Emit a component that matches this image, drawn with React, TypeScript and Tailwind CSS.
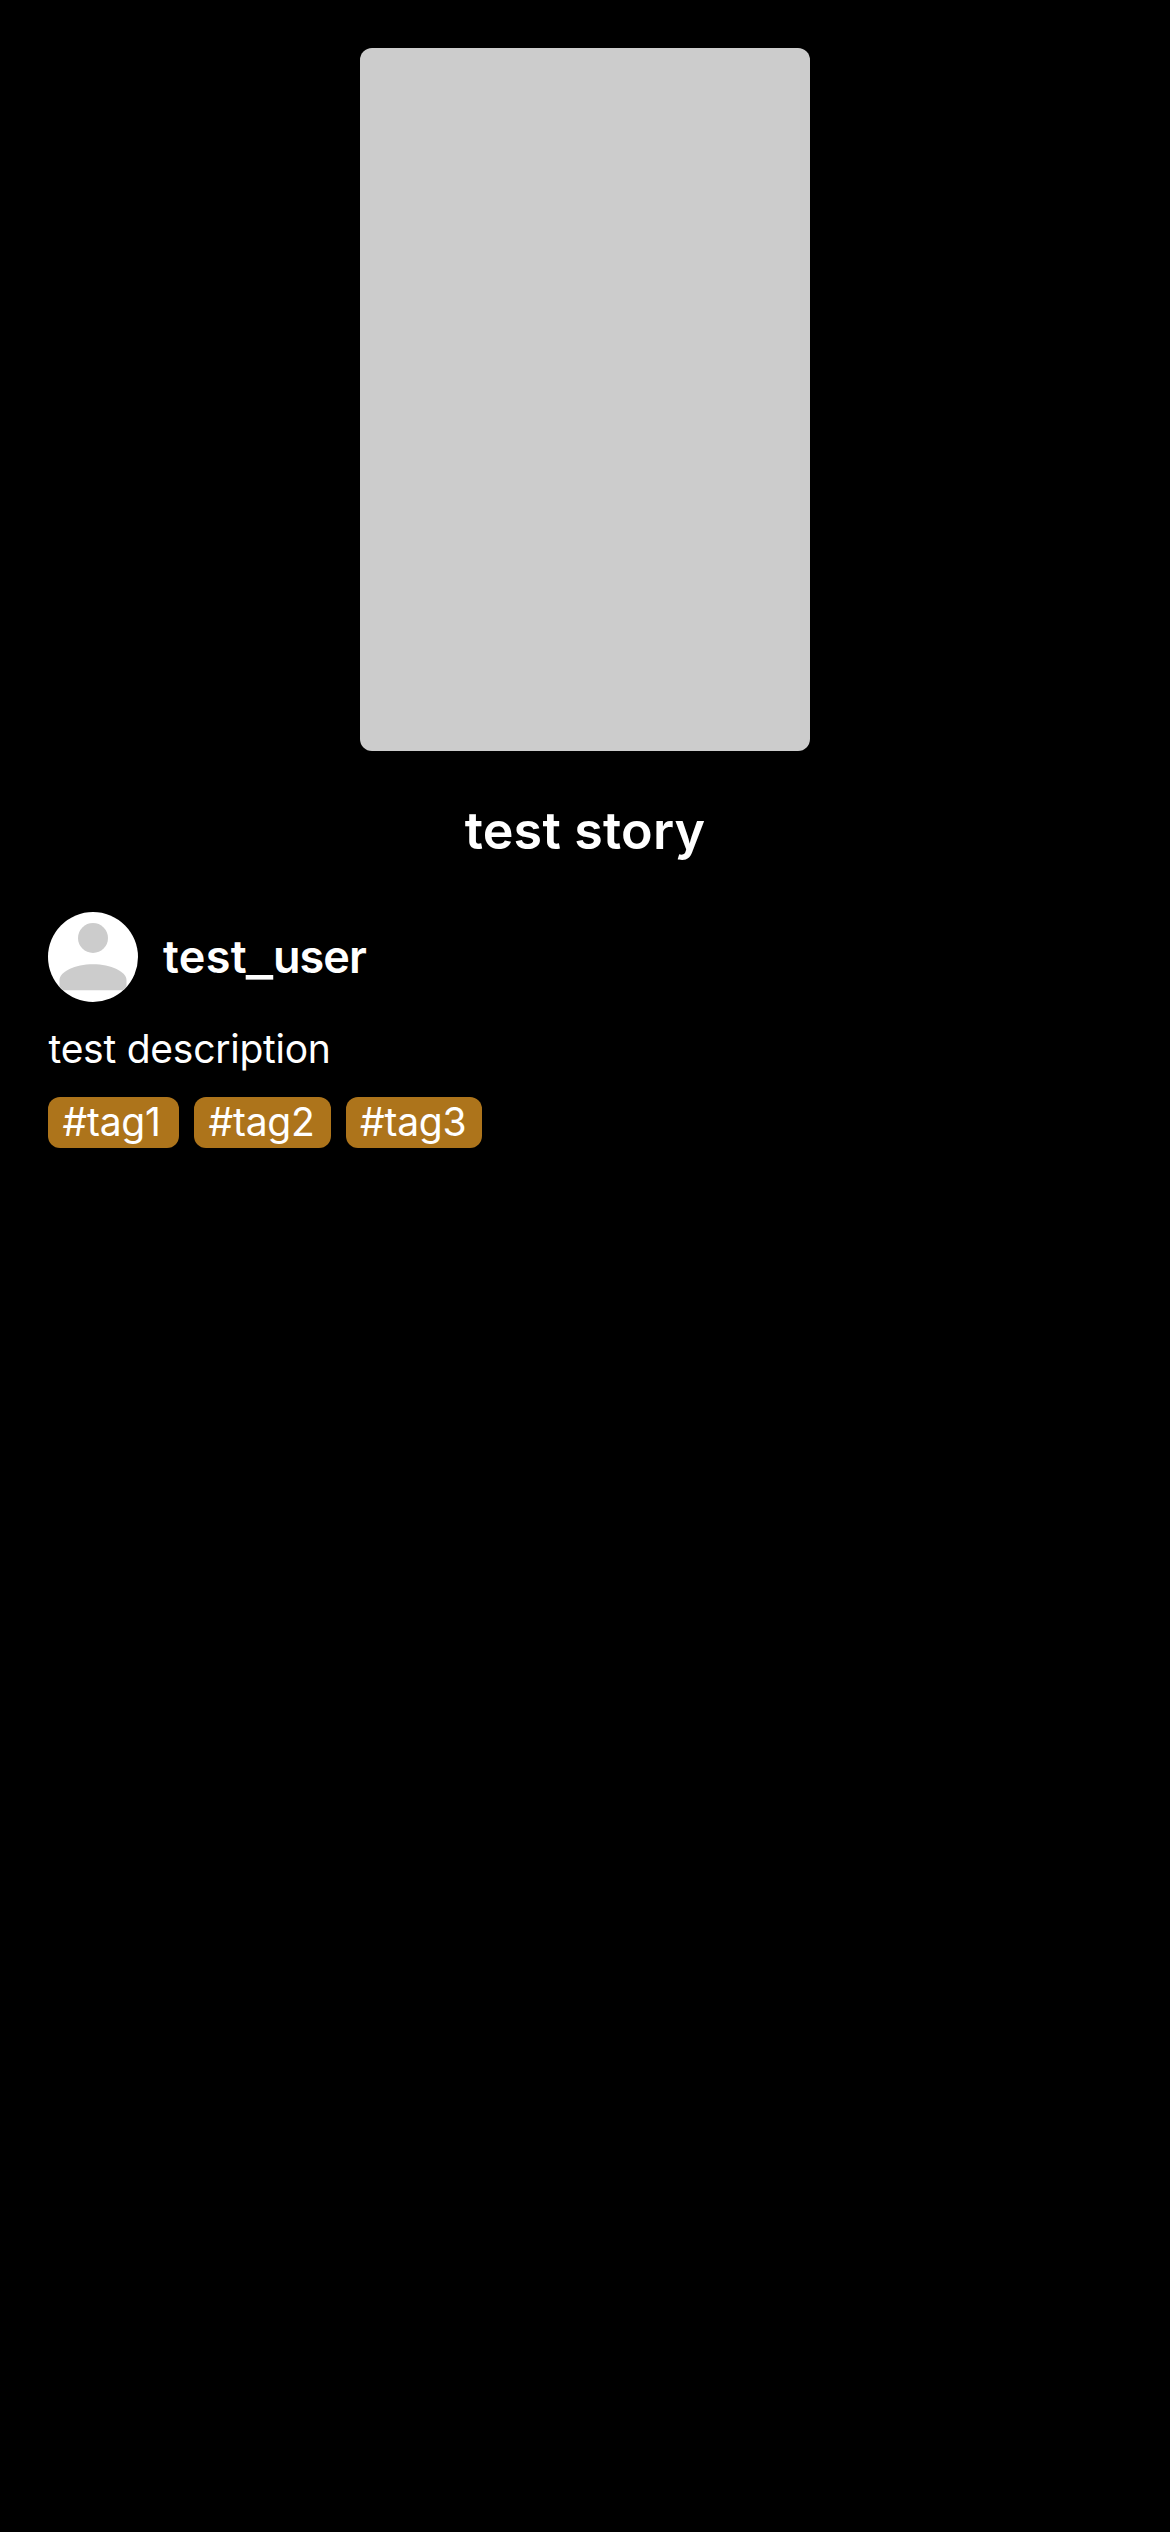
const tags = [
  { label: "#tag1", size: "w-[131px]" },
  { label: "#tag2", size: "w-[136.5px]" },
  { label: "#tag3", size: "w-[136.5px]" },
];

function Avatar() {
  return (
    <svg className="size-[90px] shrink-0 rounded-full bg-white" viewBox="0 0 90 90" fill="#cccccc">
      <circle cx="45" cy="26" r="15" />
      <path d="M11.5 78.3V68C11.5 60 27 52.3 45 52.3S78.5 60 78.5 68V78.3Z" />
    </svg>
  );
}

export default function App() {
  return (
    <main className="flex min-h-[2532px] w-[1170px] flex-col bg-black px-12 pt-12 font-['Inter',sans-serif] text-white">
      <div className="h-[703px] w-[450px] self-center rounded-xl bg-[#cccccc]" />
      <h1 className="mt-[48px] self-center text-[52px] leading-[64px] font-semibold tracking-[0.2px] whitespace-nowrap">
        test story
      </h1>
      <div className="mt-[49px] flex items-center gap-[25px]">
        <Avatar />
        <span className="text-[45px] leading-[54px] font-semibold whitespace-nowrap">
          <span className="tracking-[0.3px]">test</span>
          <span className="mx-[2.5px] inline-block translate-y-[1.5px] scale-x-[1.3]">_</span>
          <span className="tracking-[-1px]">user</span>
        </span>
      </div>
      <p className="mt-[23px] pl-[0.5px] text-[39px] leading-[48px] tracking-[-0.25px]">test description</p>
      <div className="mt-[24px] flex gap-[15px]">
        {tags.map((tag) => (
          <span
            key={tag.label}
            className={`${tag.size} h-[51px] rounded-xl bg-[#ad741b] pl-[14.5px] text-[39px] leading-[49px] tracking-[-0.25px]`}
          >
            {tag.label}
          </span>
        ))}
      </div>
    </main>
  );
}
